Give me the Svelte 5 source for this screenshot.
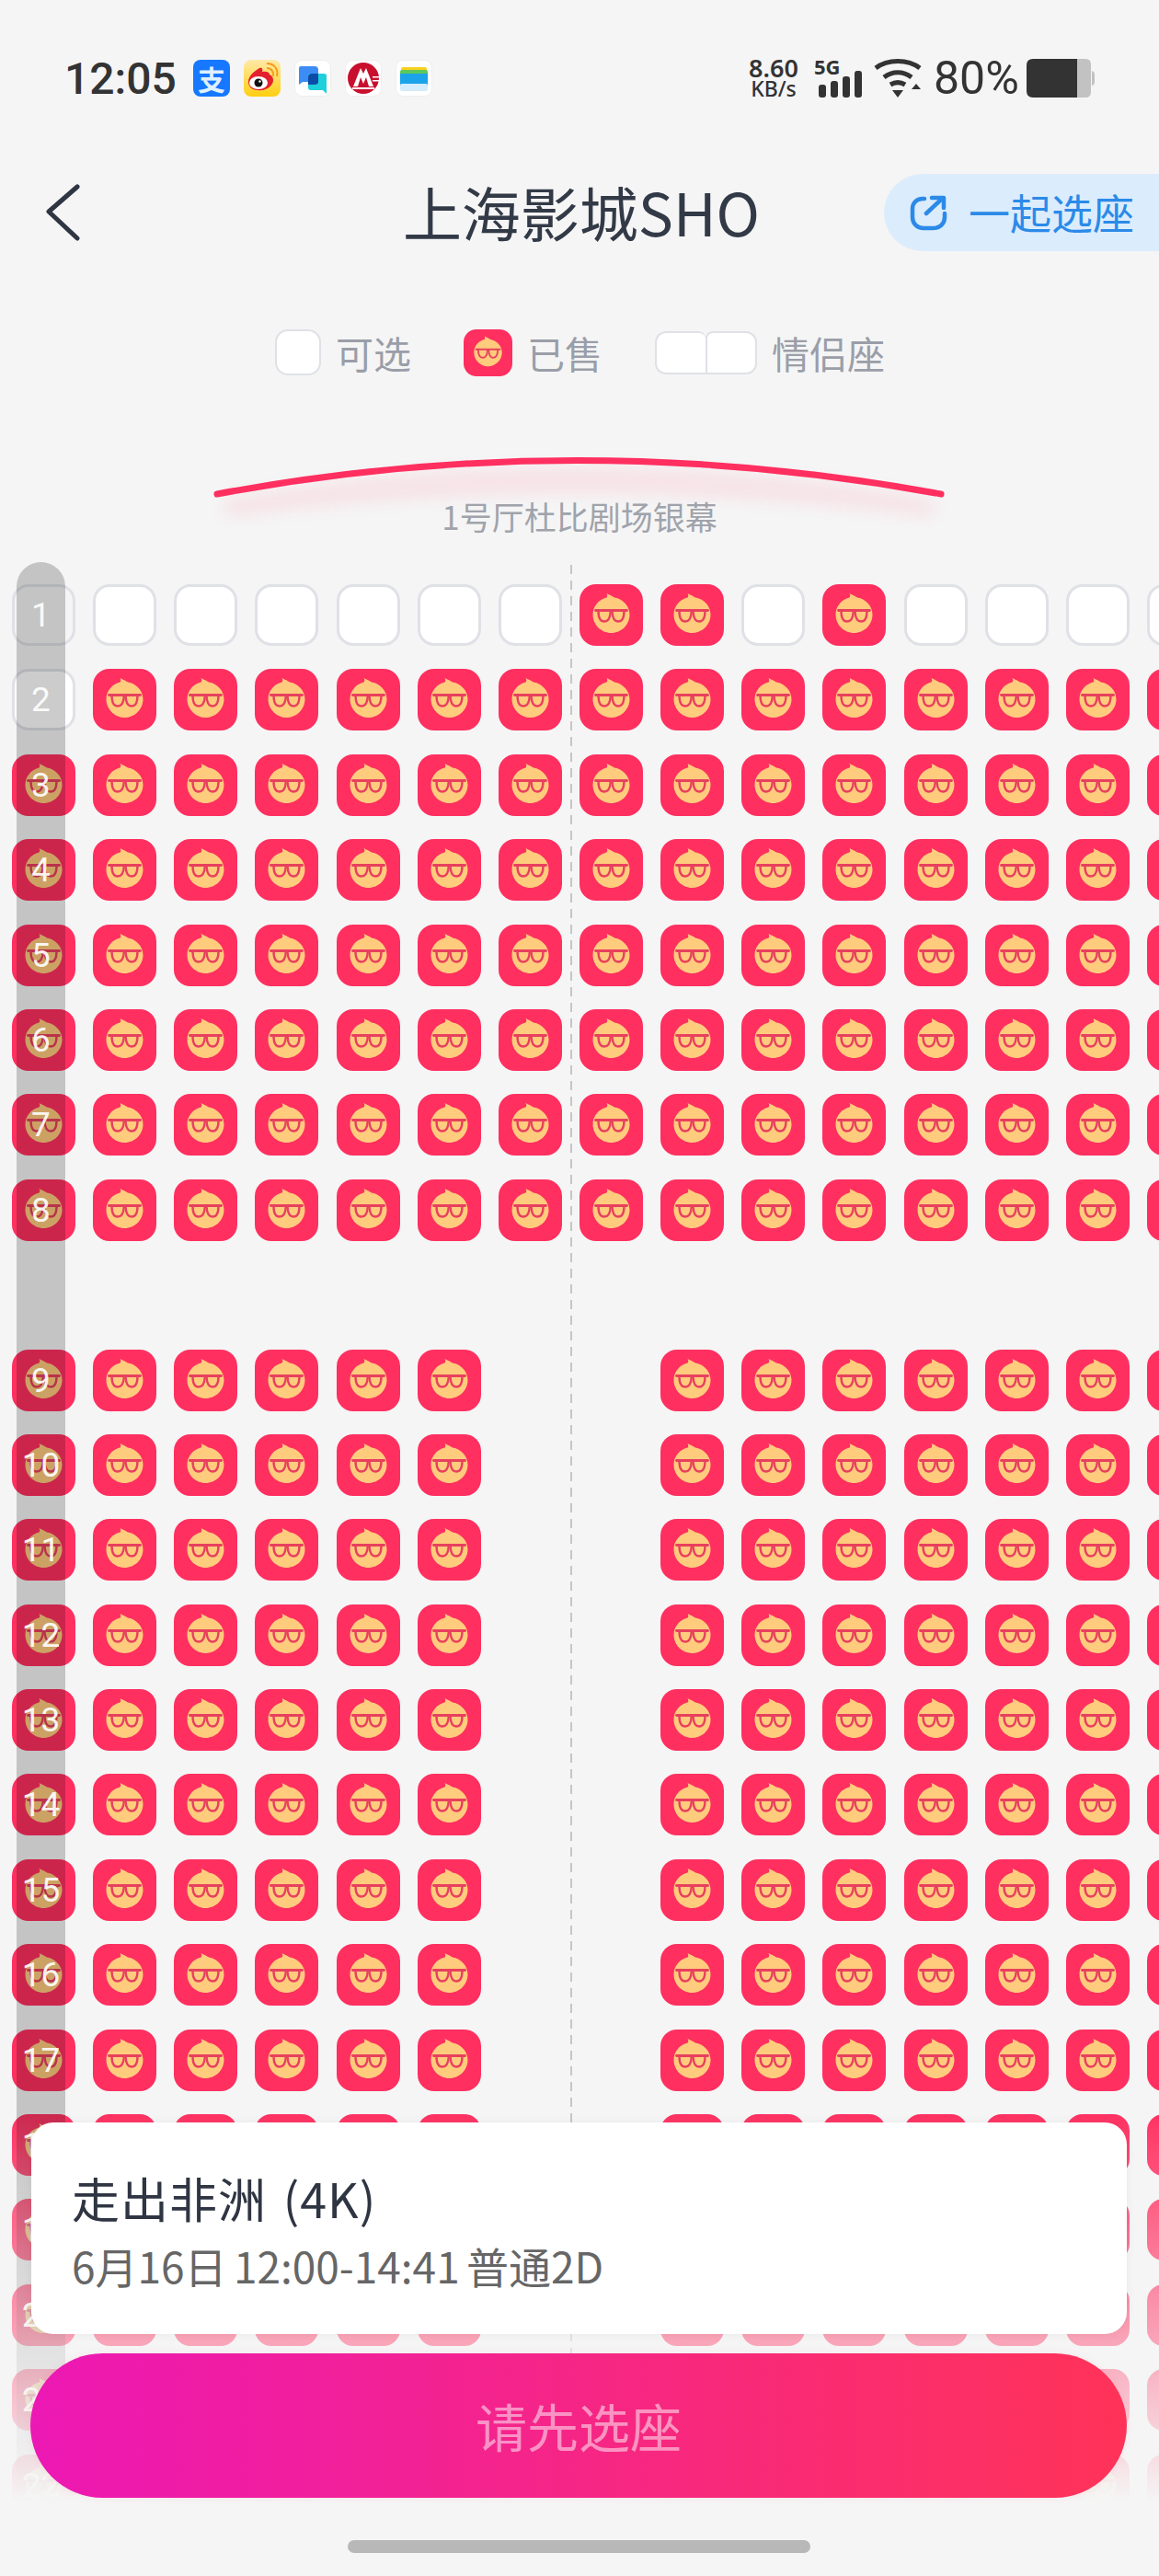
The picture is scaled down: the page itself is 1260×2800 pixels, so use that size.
<script>
  // sold seats in row 1, seats in the aisle are left out from row 9 on
  const freeFirstRow = [1, 2, 3, 4, 5, 6, 9, 11, 12, 13, 14];
  const rowCount = 23;
  const colCount = 15;

  function seatType(row, col) {
    if (row === 8) return "gap";
    if (row === 0) {
      if (col === 0) return "ghost";
      return freeFirstRow.includes(col) ? "free" : "sold";
    }
    if (row === 1 && col === 0) return "free";
    if (row > 8 && (col === 6 || col === 7)) return "gap";
    return "sold";
  }

  const seats = [];
  for (let r = 0; r < rowCount; r++) {
    for (let c = 0; c < colCount; c++) {
      seats.push(seatType(r, c));
    }
  }

  const labels = [];
  for (let r = 0; r < rowCount; r++) {
    if (r < 8) labels.push(r + 1);
    else if (r === 8) labels.push("");
    else labels.push(r);
  }
</script>

<svg class="defs" width="0" height="0" aria-hidden="true">
  <defs>
    <symbol id="face" viewBox="0 0 69 67">
      <path
        d="M29.500 10 C32.500 11.500 36 13 38 14.500 C47.500 16 54.500 24 54.500 33 C54.500 44 45.500 53 34.500 53 C23.500 53 14.500 44 14.500 33 C14.500 24 21 16.500 29.500 14.500 C30.500 13.500 30.500 11.500 29.500 10 Z"
        fill="#ffcb7d"
      />
      <g fill="none" stroke="#e8405e" stroke-width="2.400" stroke-linecap="round">
        <path d="M17.500 28.500 H51.500" stroke-width="2.800" />
        <path d="M20.500 29 C20.500 36 22 40.500 27 40.500 C32 40.500 33.500 35 33.800 29.500" />
        <path d="M35.500 29.500 C35.800 35 37 40.500 42 40.500 C47 40.500 48.500 36 48.500 29" />
      </g>
    </symbol>
  </defs>
</svg>

<div class="page">
  <header class="status">
    <div class="status-left">
      <span class="time">12:05</span>
      <div class="apps">
        <span class="app alipay">支</span>
        <svg class="app" viewBox="0 0 40 40">
          <defs>
            <linearGradient id="wb" x1="0" y1="0" x2="0" y2="1">
              <stop offset="0" stop-color="#ffe9a8" />
              <stop offset="1" stop-color="#ffcf10" />
            </linearGradient>
          </defs>
          <rect width="40" height="40" rx="8" fill="url(#wb)" />
          <path d="M5 24 C5 17 12 12 17 9 C20 8 21 10 20 13 C24 12 28 13 28 16 C32 18 33 22 31 26 C28 31 22 34 15 33 C9 33 5 29 5 24 Z" fill="#e5202e" />
          <ellipse cx="16" cy="25" rx="10" ry="7" fill="#fff" />
          <circle cx="16" cy="25" r="4.500" fill="#111" />
          <circle cx="17.500" cy="23.500" r="1.200" fill="#fff" />
          <path d="M25 9 C30 9 33 13 32 18 M25 4 C33 4 38 10 36 18" fill="none" stroke="#f59a1c" stroke-width="2" />
        </svg>
        <svg class="app" viewBox="0 0 40 40">
          <rect x="0.500" y="0.500" width="39" height="39" rx="8" fill="#fff" stroke="#eee" />
          <path d="M5 9 Q5 7 7 7 H22 Q26 7 26 11 V24 H9 L5 27 Z" fill="#3d8cf5" />
          <path d="M15 17 Q15 15 17 15 H32 Q35 15 35 17 V37 L31 33 H18 Q15 33 15 30 Z" fill="#1fd0dc" />
          <path d="M15 19 Q15 15 19 15 H26 V24 Q26 27 22 27 H15 Z" fill="#0d4ba8" />
        </svg>
        <svg class="app" viewBox="0 0 40 40">
          <rect x="0.500" y="0.500" width="39" height="39" rx="8" fill="#fff" stroke="#eee" />
          <circle cx="20" cy="20" r="17" fill="#c8102e" />
          <path d="M9 29 L17 9 L20 15 L23 9 L31 29 H26 L23 19 L20 26 L17 19 L14 29 Z" fill="#fff" />
          <rect x="30" y="18" width="7" height="1.500" fill="#fff" />
          <rect x="30" y="22" width="7" height="1.500" fill="#fff" />
          <rect x="8" y="30" width="24" height="2" fill="#fff" />
        </svg>
        <svg class="app" viewBox="0 0 40 40">
          <rect x="0.500" y="0.500" width="39" height="39" rx="8" fill="#fff" stroke="#eee" />
          <rect x="6" y="8" width="28" height="10" rx="2" fill="#f6d21e" />
          <rect x="5" y="11" width="30" height="10" rx="2" fill="#5cc85c" />
          <rect x="5" y="15" width="30" height="13" fill="#1aa3e8" />
          <rect x="5" y="26" width="30" height="8" rx="2" fill="#d4ecfb" />
        </svg>
      </div>
    </div>
    <div class="status-right">
      <div class="speed">
        <span class="speed-num">8.60</span>
        <span class="speed-unit">KB/s</span>
      </div>
      <div class="network">
        <span class="fiveg">5G</span>
        <svg width="50" height="42" viewBox="0 0 50 42">
          <rect x="3" y="28" width="8" height="14" rx="3" />
          <rect x="16" y="24" width="8" height="18" rx="3" />
          <rect x="29" y="19" width="8" height="23" rx="3" />
          <rect x="42" y="13" width="8" height="29" rx="3" />
        </svg>
      </div>
      <svg class="wifi" width="52" height="42" viewBox="0 0 52 42">
        <g fill="none" stroke="#333" stroke-width="5">
          <path d="M2 10 C15 0 37 0 50 10" />
          <path d="M11 20 C20 13 32 13 41 20" />
          <path d="M18 28 C23 25 29 25 34 28" />
        </g>
        <path d="M20 34 H32 L26 42 Z" fill="#333" />
        <path d="M41 33 H51 L46 27 Z" fill="#333" />
      </svg>
      <span class="battery-num">80%</span>
      <svg class="battery" width="74" height="42" viewBox="0 0 74 42">
        <path d="M55 0 H64 Q70 0 70 6 V36 Q70 42 64 42 H55 Z" fill="#c2c2c2" />
        <path d="M71 13 Q74 14 74 17 V25 Q74 28 71 29 Z" fill="#c2c2c2" />
        <path d="M7 0 H55 V42 H7 Q0 42 0 35 V7 Q0 0 7 0 Z" fill="#333" />
      </svg>
    </div>
  </header>

  <nav class="nav">
    <svg class="back" width="40" height="64" viewBox="0 0 40 64">
      <path d="M35 4 L4 31 L35 60" fill="none" stroke="#2f3542" stroke-width="5" stroke-linecap="round" stroke-linejoin="round" />
    </svg>
    <h1 class="title">上海影城SHO</h1>
    <div class="together">
      <svg width="42" height="40" viewBox="0 0 42 40">
        <g fill="none" stroke="#2b8ae8" stroke-width="4.500" stroke-linecap="round" stroke-linejoin="round">
          <path d="M16 5 H14 C7 5 3 10 3 16 V25 C3 32 8 37 15 37 H25 C33 37 38 32 38 25 V21" />
          <path d="M18 21 L34 6" />
          <path d="M24 4 H37 V15" />
        </g>
      </svg>
      <span class="together-text">一起选座</span>
    </div>
  </nav>

  <div class="legend">
    <div class="legend-item">
      <span class="mini free"></span>
      <span>可选</span>
    </div>
    <div class="legend-item sold-item">
      <span class="mini sold"><svg width="53" height="51"><use href="#face" /></svg></span>
      <span>已售</span>
    </div>
    <div class="legend-item couple-item">
      <span class="couple"><span class="half left"></span><span class="half right"></span></span>
      <span>情侣座</span>
    </div>
  </div>

  <div class="screen">
    <svg width="1260" height="90" viewBox="0 0 1260 90">
      <defs>
        <filter id="blur" x="-10%" y="-50%" width="120%" height="200%">
          <feGaussianBlur stdDeviation="9" />
        </filter>
      </defs>
      <path d="M244 53 Q626 -18 1015 53 V72 Q626 22 244 72 Z" fill="#ff2f60" opacity="0.09" filter="url(#blur)" />
      <path d="M236 47 Q626 -26 1023 47" fill="none" stroke="#ff2f60" stroke-width="7" stroke-linecap="round" />
    </svg>
    <p class="hall">1号厅杜比剧场银幕</p>
  </div>

  <section class="seatmap">
    <div class="grid">
      {#each seats as type}
        {#if type === "sold"}
          <div class="seat sold"><svg width="69" height="67"><use href="#face" /></svg></div>
        {:else if type === "free"}
          <div class="seat free"></div>
        {:else if type === "ghost"}
          <div class="seat ghost"></div>
        {:else}
          <div></div>
        {/if}
      {/each}
    </div>
    <div class="aisle"></div>
    <div class="rail">
      {#each labels as label}
        <span class="rail-label">{label}</span>
      {/each}
    </div>
  </section>

  <div class="fade"></div>

  <div class="bottom">
    <div class="card">
      <div class="movie">走出非洲 (4K)</div>
      <div class="show">6月16日 12:00-14:41 普通2D</div>
    </div>
    <div class="cta">请先选座</div>
  </div>
  <div class="home-bar"></div>
</div>

<style>
  :global(body) {
    margin: 0;
    background: #f5f5f5;
  }

  .defs {
    position: absolute;
  }

  .page {
    position: relative;
    width: 1260px;
    height: 2800px;
    overflow: hidden;
    background: #f5f5f5;
    font-family: "Noto Sans CJK SC", "Noto Sans", sans-serif;
  }

  .status {
    display: flex;
    justify-content: space-between;
    align-items: center;
    height: 170px;
    padding: 0 70px;
    color: #333;
  }

  .status-left,
  .status-right,
  .apps {
    display: flex;
    align-items: center;
  }

  .time {
    font-family: Roboto, sans-serif;
    font-size: 48px;
    font-weight: 500;
    width: 140px;
  }

  .apps {
    gap: 15px;
  }

  .app {
    display: block;
    width: 40px;
    height: 40px;
  }

  .alipay {
    display: flex;
    align-items: center;
    justify-content: center;
    border-radius: 8px;
    background: #1677ff;
    color: #dff0ff;
    font-size: 30px;
    font-weight: 700;
    line-height: 40px;
  }

  .speed {
    display: flex;
    flex-direction: column;
    align-items: center;
    width: 56px;
    margin-right: 18px;
    font-family: "Noto Sans", sans-serif;
    font-weight: 600;
    line-height: 23px;
  }

  .speed-num {
    font-size: 27px;
  }

  .speed-unit {
    font-size: 23px;
    font-weight: 500;
  }

  .network {
    position: relative;
    height: 42px;
    margin-right: 13px;
    fill: #333;
  }

  .network svg {
    display: block;
  }

  .fiveg {
    position: absolute;
    left: -2px;
    top: -6px;
    font-family: "Noto Sans", sans-serif;
    font-size: 22px;
    line-height: 28px;
    font-weight: 700;
  }

  .wifi {
    margin-right: 13px;
  }

  .battery-num {
    font-family: Roboto, sans-serif;
    font-size: 50px;
    width: 101px;
  }

  .nav {
    position: relative;
    display: flex;
    align-items: center;
    justify-content: center;
    height: 84px;
    margin-top: 19px;
  }

  .back {
    position: absolute;
    left: 49px;
    top: 10px;
  }

  .title {
    margin: 0 0 5px 4px;
    font-size: 64px;
    font-weight: 400;
    color: #333a47;
    line-height: 84px;
  }

  .together {
    position: absolute;
    right: 0;
    top: 0;
    display: flex;
    align-items: center;
    gap: 22px;
    width: 299px;
    height: 84px;
    box-sizing: border-box;
    padding-left: 28px;
    border-radius: 42px 0 0 42px;
    background: #dbecfd;
    color: #2b8ae8;
    font-size: 45px;
  }

  .together-text {
    margin-bottom: 2px;
  }

  .legend {
    display: flex;
    align-items: center;
    height: 52px;
    margin-top: 84px;
    padding-left: 299px;
    color: #9a9ea8;
    font-size: 41px;
  }

  .legend-item {
    display: flex;
    align-items: center;
    gap: 16px;
  }

  .sold-item {
    margin-left: 57px;
  }

  .couple-item {
    margin-left: 57px;
  }

  .mini {
    display: block;
    box-sizing: border-box;
    width: 50px;
    height: 50px;
    border-radius: 14px;
  }

  .mini.free {
    background: #fff;
    border: 2px solid #dfe1e6;
  }

  .mini.sold {
    width: 53px;
    height: 51px;
    background: #ff2f60;
  }

  .mini svg {
    display: block;
  }

  .couple {
    display: flex;
    width: 111px;
    height: 47px;
  }

  .half {
    flex: 1;
    box-sizing: border-box;
    background: #fff;
    border: 2px solid #dfe1e6;
  }

  .half.left {
    border-radius: 12px 8px 0 12px;
    border-right: 0;
  }

  .half.right {
    border-radius: 8px 12px 12px 0;
    border-left: 2px solid #dfe1e6;
  }

  .screen {
    position: relative;
    height: 226px;
    padding-top: 81px;
    box-sizing: border-box;
  }

  .screen svg {
    display: block;
  }

  .hall {
    position: absolute;
    left: 0;
    right: 0;
    top: 130px;
    margin: 0;
    text-align: center;
    font-size: 35px;
    line-height: 44px;
    color: #a0a3ab;
  }

  .seatmap {
    position: relative;
    padding-left: 13px;
  }

  .grid {
    display: grid;
    grid-template-columns: repeat(15, 69px);
    grid-auto-rows: 67px;
    column-gap: 19.150px;
    row-gap: 25.400px;
  }

  .seat {
    box-sizing: border-box;
    border-radius: 18px;
  }

  .seat svg {
    display: block;
  }

  .seat.sold {
    background: #ff2f60;
  }

  .seat.free {
    background: #fff;
    border: 3px solid #dfe1e6;
  }

  .seat.ghost {
    border: 3px solid #dfe1e6;
  }

  .aisle {
    position: absolute;
    left: 620px;
    top: -21px;
    width: 2px;
    height: 1960px;
    background: repeating-linear-gradient(to bottom, #c6c6c6 0 10px, transparent 10px 17px);
  }

  .rail {
    position: absolute;
    left: 18px;
    top: -24px;
    display: grid;
    grid-auto-rows: 67px;
    row-gap: 25.400px;
    width: 53px;
    padding-top: 24px;
    padding-bottom: 40px;
    border-radius: 27px 27px 0 0;
    background: rgba(0, 0, 0, 0.2);
  }

  .rail-label {
    display: flex;
    align-items: center;
    justify-content: center;
    font-family: Roboto, sans-serif;
    font-size: 37px;
    color: rgba(255, 255, 255, 0.92);
  }

  .fade {
    position: absolute;
    left: 0;
    right: 0;
    bottom: 0;
    height: 510px;
    background: linear-gradient(to bottom, rgba(245, 245, 245, 0) 0, #f5f5f5 430px);
  }

  .bottom {
    position: absolute;
    left: 33px;
    top: 2307px;
    width: 1192px;
    display: flex;
    flex-direction: column;
    gap: 21px;
  }

  .card {
    box-sizing: border-box;
    height: 230px;
    margin-left: 1px;
    padding: 50px 0 0 44px;
    border-radius: 24px;
    background: #fff;
    box-shadow: 0 0 12px rgba(0, 0, 0, 0.05);
  }

  .movie {
    font-size: 52px;
    line-height: 64px;
    letter-spacing: 1px;
    word-spacing: 5px;
    color: #2f3542;
  }

  .show {
    margin-top: 13px;
    font-size: 46px;
    line-height: 56px;
    word-spacing: -3px;
    color: #666;
  }

  .cta {
    display: flex;
    align-items: center;
    justify-content: center;
    box-sizing: border-box;
    height: 157px;
    padding-bottom: 3px;
    border-radius: 79px;
    background: linear-gradient(to right, #ec18b4, #ff3358);
    color: rgba(255, 255, 255, 0.5);
    font-size: 56px;
    box-shadow: 0 0 10px rgba(255, 50, 100, 0.08);
  }

  .home-bar {
    position: absolute;
    left: 378px;
    top: 2761px;
    width: 503px;
    height: 14px;
    border-radius: 7px;
    background: #b8b8b8;
  }
</style>
